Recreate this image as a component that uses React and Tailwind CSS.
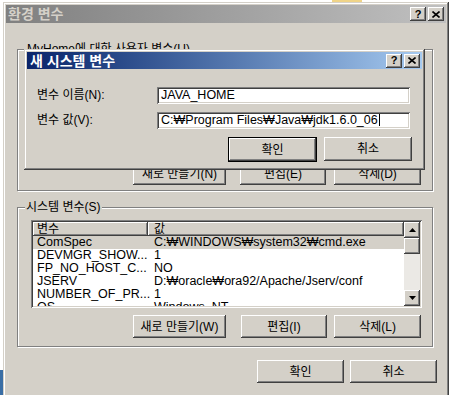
import React from 'react';

const RAISED =
  "shadow-[inset_-1px_-1px_0_#404040,inset_1px_1px_0_#ffffff,inset_-2px_-2px_0_#808080,inset_2px_2px_0_#d4d0c8]";
const WINDOW =
  "shadow-[inset_-1px_-1px_0_#404040,inset_1px_1px_0_#d4d0c8,inset_-2px_-2px_0_#808080,inset_2px_2px_0_#ffffff]";
const SUNKEN =
  "shadow-[inset_1px_1px_0_#808080,inset_-1px_-1px_0_#ffffff,inset_2px_2px_0_#404040,inset_-2px_-2px_0_#d4d0c8]";
const ETCHED = "border border-[#808080] shadow-[inset_1px_1px_0_#ffffff,1px_1px_0_#ffffff]";

const SYSTEM_VARS = [
  { name: "ComSpec", value: "C:₩WINDOWS₩system32₩cmd.exe", selected: true },
  { name: "DEVMGR_SHOW...", value: "1" },
  { name: "FP_NO_HOST_C...", value: "NO" },
  { name: "JSERV", value: "D:₩oracle₩ora92/Apache/Jserv/conf" },
  { name: "NUMBER_OF_PR...", value: "1" },
  { name: "OS", value: "Windows_NT" },
];

function Button({ children, className = "" }) {
  return (
    <div className={`h-[23px] flex items-center justify-center bg-[#d4d0c8] ${RAISED} ${className}`}>
      {children}
    </div>
  );
}

function CaptionButtons() {
  return (
    <div className="flex gap-[2px]">
      <div className={`w-[16px] h-[14px] bg-[#d4d0c8] ${RAISED} flex items-center justify-center text-[11px] font-bold leading-none text-black`}>
        ?
      </div>
      <div className={`w-[16px] h-[14px] bg-[#d4d0c8] ${RAISED} flex items-center justify-center`}>
        <svg width="8" height="7" viewBox="0 0 8 7">
          <path d="M0.5 0.5 L7.5 6.5 M7.5 0.5 L0.5 6.5" stroke="#000" strokeWidth="1.6" />
        </svg>
      </div>
    </div>
  );
}

function Arrow({ down }) {
  return (
    <svg width="7" height="4" viewBox="0 0 7 4">
      <polygon points={down ? "0,0 7,0 3.5,4" : "0,4 7,4 3.5,0"} fill="#000" />
    </svg>
  );
}

function NewVariableDialog() {
  return (
    <div className={`absolute left-[24px] top-[49px] w-[401px] h-[121px] bg-[#d4d0c8] p-[3px] ${WINDOW}`}>
      <div className="h-[17px] flex items-center justify-between pl-[3px] pr-[2px] bg-gradient-to-r from-[#0a246a] to-[#a6caf0]">
        <span className="text-white font-bold text-[14px] leading-none">새 시스템 변수</span>
        <CaptionButtons />
      </div>

      <div className="mt-[17px] flex items-center">
        <span className="w-[130px] pl-[10px]">변수 이름(N):</span>
        <div className={`w-[253px] h-[17px] bg-white ${SUNKEN} pl-[4px] flex items-center text-[12.5px]`}>JAVA_HOME</div>
      </div>
      <div className="mt-[7px] flex items-center">
        <span className="w-[130px] pl-[10px]">변수 값(V):</span>
        <div className={`w-[253px] h-[17px] bg-white ${SUNKEN} pl-[4px] flex items-center text-[12.5px]`}>
          C:₩Program Files₩Java₩jdk1.6.0_06
          <span className="w-[1px] h-[12px] bg-black ml-[1px]" />
        </div>
      </div>

      <div className="mt-[8px] flex justify-end gap-[7px] pr-[10px]">
        <div className="border border-black">
          <Button className="w-[87px] h-[22px]">확인</Button>
        </div>
        <Button className="w-[88px] h-[24px]">취소</Button>
      </div>
    </div>
  );
}

function VariableList() {
  return (
    <div className={`ml-[13px] mt-[12px] w-[391px] h-[88px] bg-white p-[2px] ${SUNKEN} flex`}>
      <div className="flex-1 overflow-hidden">
        <div className="flex h-[14px]">
          <div className={`w-[115px] bg-[#d4d0c8] ${RAISED} pl-[4px] leading-[14px]`}>변수</div>
          <div className={`flex-1 bg-[#d4d0c8] ${RAISED} pl-[6px] leading-[14px]`}>값</div>
        </div>
        {SYSTEM_VARS.map((v) => (
          <div key={v.name} className={`flex h-[13px] leading-[13px] text-[12.5px] ${v.selected ? "bg-[#d4d0c8]" : ""}`}>
            <span className="w-[115px] pl-[4px] whitespace-nowrap">{v.name}</span>
            <span className="pl-[6px] whitespace-nowrap">{v.value}</span>
          </div>
        ))}
      </div>
      <div className="w-[16px] flex flex-col">
        <div className={`h-[16px] bg-[#d4d0c8] ${RAISED} flex items-center justify-center`}>
          <Arrow />
        </div>
        <div className={`h-[16px] bg-[#d4d0c8] ${RAISED}`} />
        <div className="flex-1 bg-[#ebe9e5]" />
        <div className={`h-[16px] bg-[#d4d0c8] ${RAISED} flex items-center justify-center`}>
          <Arrow down />
        </div>
      </div>
    </div>
  );
}

export default function App() {
  return (
    <div className="relative w-[450px] h-[395px] overflow-hidden bg-white text-[12px] text-black font-['Liberation_Sans','DejaVu_Sans','Noto_Sans_CJK_KR',sans-serif]">
      <div className="h-[2px] flex">
        <div className="ml-[332px] w-[30px] bg-[#f0d488]" />
      </div>
      <div className="flex h-[393px]">
        <div className="w-[3px] flex flex-col justify-end">
          <div className="h-[25px] bg-[#3a6ea5]" />
        </div>
        <div className={`w-[446px] h-[420px] bg-[#d4d0c8] p-[3px] ${WINDOW}`}>
          <div className="h-[18px] flex items-center justify-between pl-[2px] pr-[2px] bg-gradient-to-r from-[#808080] to-[#c0c0c0]">
            <span className="text-[#d4d0c8] font-bold text-[14px] leading-none">환경 변수</span>
            <CaptionButtons />
          </div>

          {/* user variables group (mostly covered) */}
          <div className={`relative mt-[26px] ml-[11px] w-[416px] h-[142px] ${ETCHED} flex items-end`}>
            <span className="absolute -top-[8px] left-[8px] px-[1px] bg-[#d4d0c8] leading-[14px]">
              MyHome에 대한 사용자 변수(U)
            </span>
            <div className="ml-[115px] mb-[5px] flex">
              <Button className="w-[93px]">새로 만들기(N)</Button>
              <Button className="ml-[14px] w-[86px]">편집(E)</Button>
              <Button className="ml-[8px] w-[87px]">삭제(D)</Button>
            </div>
          </div>

          {/* system variables group */}
          <div className={`relative mt-[16px] ml-[11px] w-[416px] h-[140px] ${ETCHED}`}>
            <span className="absolute -top-[8px] left-[7px] px-[1px] bg-[#d4d0c8] leading-[14px]">
              시스템 변수(S)
            </span>
            <VariableList />
            <div className="mt-[7px] ml-[115px] flex">
              <Button className="w-[93px]">새로 만들기(W)</Button>
              <Button className="ml-[15px] w-[86px]">편집(I)</Button>
              <Button className="ml-[7px] w-[87px]">삭제(L)</Button>
            </div>
          </div>

          <div className="mt-[13px] flex justify-end gap-[6px] pr-[9px]">
            <Button className="w-[87px]">확인</Button>
            <Button className="w-[87px]">취소</Button>
          </div>
        </div>
      </div>

      <NewVariableDialog />
    </div>
  );
}
